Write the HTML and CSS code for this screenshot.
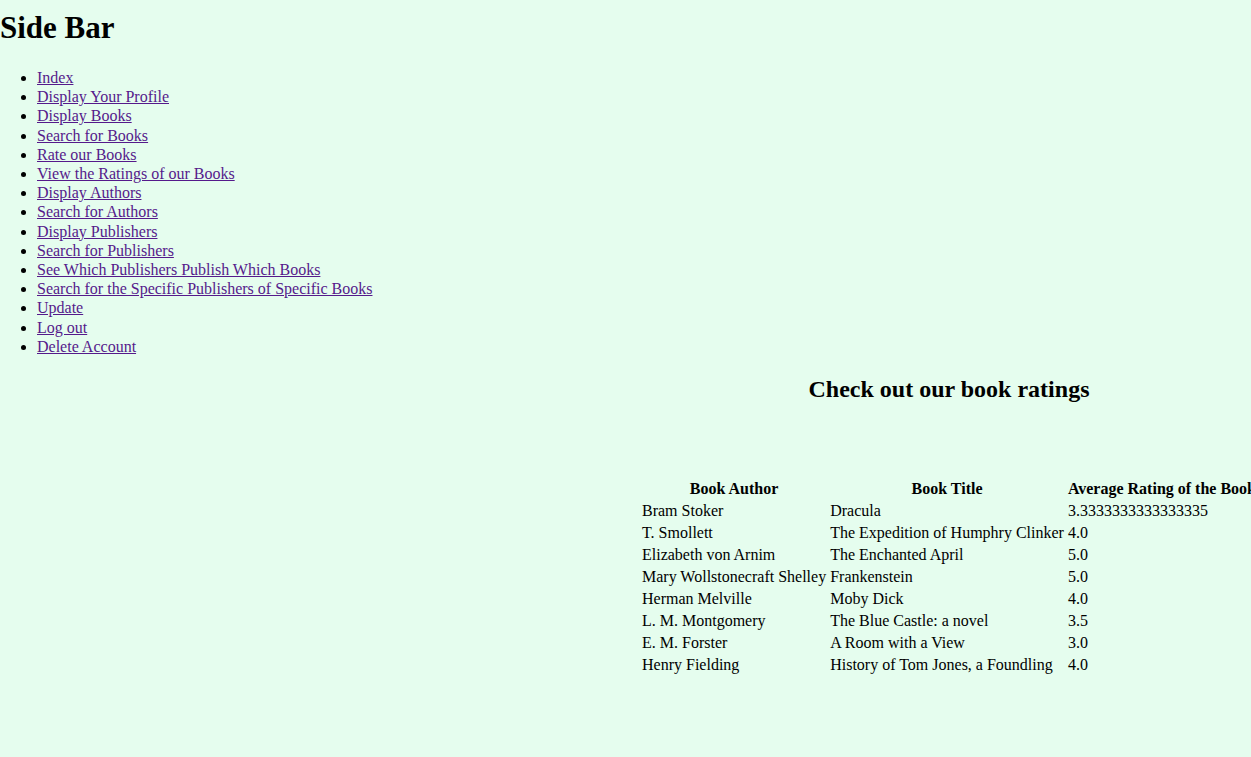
FILE: index.html
```html
<!DOCTYPE html>
<html>
<head>
<meta charset="utf-8">
<link rel="stylesheet" href="styles.css">
</head>
<body>
<nav class="sidebar">
  <h1 class="side-title">Side Bar</h1>
  <ul class="nav-list">
    <li><a href="#">Index</a></li>
    <li><a href="#">Display Your Profile</a></li>
    <li><a href="#">Display Books</a></li>
    <li><a href="#">Search for Books</a></li>
    <li><a href="#">Rate our Books</a></li>
    <li><a href="#">View the Ratings of our Books</a></li>
    <li><a href="#">Display Authors</a></li>
    <li><a href="#">Search for Authors</a></li>
    <li><a href="#">Display Publishers</a></li>
    <li><a href="#">Search for Publishers</a></li>
    <li><a href="#">See Which Publishers Publish Which Books</a></li>
    <li><a href="#">Search for the Specific Publishers of Specific Books</a></li>
    <li><a href="#">Update</a></li>
    <li><a href="#">Log out</a></li>
    <li><a href="#">Delete Account</a></li>
  </ul>
</nav>
<main class="content">
  <h2 class="content-title">Check out our book ratings</h2>
  <table class="ratings">
    <thead>
      <tr><th>Book Author</th><th>Book Title</th><th>Average Rating of the Book</th></tr>
    </thead>
    <tbody>
      <tr><td>Bram Stoker</td><td>Dracula</td><td>3.3333333333333335</td></tr>
      <tr><td>T. Smollett</td><td>The Expedition of Humphry Clinker</td><td>4.0</td></tr>
      <tr><td>Elizabeth von Arnim</td><td>The Enchanted April</td><td>5.0</td></tr>
      <tr><td>Mary Wollstonecraft Shelley</td><td>Frankenstein</td><td>5.0</td></tr>
      <tr><td>Herman Melville</td><td>Moby Dick</td><td>4.0</td></tr>
      <tr><td>L. M. Montgomery</td><td>The Blue Castle: a novel</td><td>3.5</td></tr>
      <tr><td>E. M. Forster</td><td>A Room with a View</td><td>3.0</td></tr>
      <tr><td>Henry Fielding</td><td>History of Tom Jones, a Foundling</td><td>4.0</td></tr>
    </tbody>
  </table>
</main>
</body>
</html>
```
FILE: styles.css
```css
html, body {
  margin: 0;
  padding: 0;
  background: #e5fdee;
  overflow: hidden;
}
body {
  font-family: "Liberation Serif", "Times New Roman", serif;
  font-size: 16px;
  color: #000;
}
.side-title {
  font-size: 31px;
  margin: 10px 0 22px;
}
.nav-list {
  margin: 0 0 16px;
  padding-left: 37px;
  line-height: 19.2px;
}
.nav-list a {
  color: #551a8b;
}
.content {
  margin-left: 639px;
  width: 620px;
}
.content-title {
  font-size: 24px;
  text-align: center;
  margin: 20px 0 74px;
}
.ratings {
  border-spacing: 2px;
  white-space: nowrap;
}
.ratings th, .ratings td {
  padding: 1px;
}
.ratings td {
  text-align: left;
}
```
